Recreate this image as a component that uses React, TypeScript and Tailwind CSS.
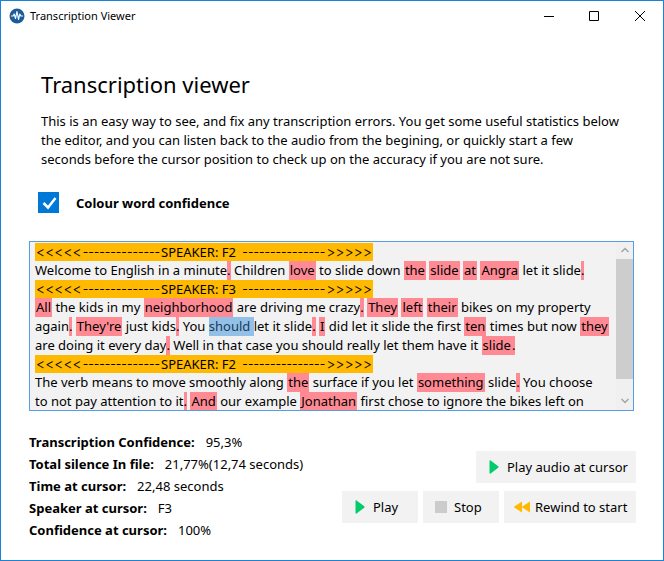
import { useState, type ReactNode } from 'react';

type Tone = 'low' | 'stop' | 'cursor';
type Piece = string | [string, Tone];

interface Line {
  speaker?: string;
  pieces?: Piece[];
}

const lines: Line[] = [
  { speaker: 'F2' },
  {
    pieces: ['Welcome to English in a minute', ['.', 'stop'], ' Children ', ['love', 'low'], ' to slide down ', ['the', 'low'], ' ', ['slide', 'low'], ' ', ['at', 'low'], ' ', ['Angra', 'low'], ' let it slide', ['.', 'stop']],
  },
  { speaker: 'F3' },
  {
    pieces: [['All', 'low'], ' the kids in my ', ['neighborhood', 'low'], ' are driving me crazy', ['.', 'stop'], ' ', ['They', 'low'], ' ', ['left', 'low'], ' ', ['their', 'low'], ' bikes on my property'],
  },
  {
    pieces: ['again', ['.', 'stop'], ' ', ["They're", 'low'], ' just kids', ['.', 'stop'], ' You ', ['should ', 'cursor'], 'let it slide', ['.', 'stop'], ' ', ['I', 'low'], ' did let it slide the first ', ['ten', 'low'], ' times but now ', ['they', 'low']],
  },
  {
    pieces: ['are doing it every day', ['.', 'stop'], ' Well in that case you should really let them have it ', ['slide', 'low'], ['.', 'stop']],
  },
  { speaker: 'F2' },
  {
    pieces: ['The verb means to move smoothly along ', ['the', 'low'], ' surface if you let ', ['something', 'low'], ' slide', ['.', 'stop'], ' You choose'],
  },
  {
    pieces: ['to not pay attention to it', ['.', 'stop'], ' ', ['And', 'low'], ' our example ', ['Jonathan', 'low'], ' first chose to ignore the bikes left on'],
  },
];

const stats = [
  { label: 'Transcription Confidence:', value: '95,3%' },
  { label: 'Total silence In file:', value: '21,77%(12,74 seconds)' },
  { label: 'Time at cursor:', value: '22,48 seconds' },
  { label: 'Speaker at cursor:', value: 'F3' },
  { label: 'Confidence at cursor:', value: '100%' },
];

function getToneColor(tone: Tone, coloured: boolean) {
  switch (tone) {
    case 'cursor':
      return 'bg-[#92c0e6] text-[#1c3a5c]';
    case 'low':
      return coloured ? 'bg-[#ff8a94] px-px' : 'px-px';
    default:
      return coloured ? 'bg-[#ff8a94]' : '';
  }
}

function SpeakerLine({ name }: { name: string }) {
  return (
    <div className="flex h-[18px] w-fit bg-[#ffb900] pl-px leading-[18px]">
      <span className="font-['Inter',sans-serif] text-[14px] font-light">{'<<<<<'}</span>
      <span className="pl-px font-['Inter',sans-serif] text-[12px]">{'-'.repeat(14)}</span>
      <span className="whitespace-pre pr-[3px] pl-px">SPEAKER: {name} </span>
      <span className="font-['Inter',sans-serif] text-[12px]">{'-'.repeat(15)}</span>
      <span className="px-px font-['Inter',sans-serif] text-[14px] font-light">{'>>>>>'}</span>
    </div>
  );
}

function TextLine({ pieces, coloured }: { pieces: Piece[]; coloured: boolean }) {
  return (
    <p className="flex h-[19px] whitespace-pre leading-[19px]">
      {pieces.map((piece, i) =>
        typeof piece === 'string' ? (
          <span key={i}>{piece}</span>
        ) : (
          <span key={i} className={getToneColor(piece[1], coloured)}>{piece[0]}</span>
        )
      )}
    </p>
  );
}

function PlayIcon() {
  return (
    <svg width="10" height="14" viewBox="0 0 10 14" aria-hidden="true">
      <path d="M.5 1.2C.5.4 1 .1 1.600.6l7.600 5.700c.5.4.5 1 0 1.400l-7.600 5.700c-.6.5-1.100.2-1.100-.6z" fill="#00cc6a" />
    </svg>
  );
}

function ActionButton({ icon, className, children }: { icon: ReactNode; className: string; children: ReactNode }) {
  return (
    <button type="button" className={`flex h-8 items-center bg-[#f2f2f2] hover:bg-[#e6e6e6] ${className}`}>
      {icon}
      <span className="pt-0.5">{children}</span>
    </button>
  );
}

export default function App() {
  const [coloured, setColoured] = useState(true);

  return (
    <div className="min-h-screen border border-[#1883d7] bg-white font-['Noto_Sans','Open_Sans',sans-serif] text-[13px] text-black">
      {/* Title bar */}
      <header className="flex h-[29px] items-center justify-between pl-2">
        <div className="flex items-center gap-[5px]">
          <svg width="16" height="16" viewBox="0 0 16 16" aria-hidden="true">
            <circle cx="8" cy="8" r="7.500" fill="#1d5c9b" />
            <path d="M2 8h2.200l1-2 1.300 4.500L8 3.500l1.500 8L10.800 6l1 2H14" fill="none" stroke="#eef6fc" strokeWidth="1.200" strokeLinejoin="round" />
          </svg>
          <span className="pt-0.5 text-[11px]">Transcription Viewer</span>
        </div>
        <div className="flex">
          <button type="button" aria-label="Minimize" className="grid h-[29px] w-[45px] place-items-center">
            <svg width="10" height="10" viewBox="0 0 10 10"><path d="M0 5.500h10" stroke="#000" /></svg>
          </button>
          <button type="button" aria-label="Maximize" className="grid h-[29px] w-[46px] place-items-center">
            <svg width="10" height="10" viewBox="0 0 10 10"><path d="M.5.5h9v9h-9z" fill="none" stroke="#000" /></svg>
          </button>
          <button type="button" aria-label="Close" className="grid h-[29px] w-[46px] place-items-center">
            <svg width="10" height="10" viewBox="0 0 10 10"><path d="M0 0l10 10M10 0L0 10" stroke="#000" /></svg>
          </button>
        </div>
      </header>

      <main className="pr-[27px] pl-7">
        <div className="pl-3">
          <h1 className="pt-[38px] text-[22px] leading-8">Transcription viewer</h1>
          <p className="mt-3 leading-[19px]">
            This is an easy way to see, and fix any transcription errors. You get some useful statistics below
            <br />
            the editor, and you can listen back to the audio from the begining, or quickly start a few
            <br />
            seconds before the cursor position to check up on the accuracy if you are not sure.
          </p>
        </div>

        <label className="mt-[23px] ml-[9px] flex w-fit items-center gap-[17px] font-bold">
          <span className="grid">
            <input
              type="checkbox"
              checked={coloured}
              onChange={(e) => setColoured(e.target.checked)}
              className="col-start-1 row-start-1 size-[21px] appearance-none border border-[#0078d7] checked:bg-[#0078d7]"
            />
            <svg width="21" height="21" viewBox="0 0 21 21" className="pointer-events-none col-start-1 row-start-1" aria-hidden="true">
              <path d="M5.500 11l4.500 4.500L17.500 6" fill="none" stroke="#fff" strokeWidth="2.500" />
            </svg>
          </span>
          <span className="pt-0.5">Colour word confidence</span>
        </label>

        {/* Transcript */}
        <div className="mt-[27px] mr-0.5 flex h-[170px] border border-[#569de5] bg-[#f2f2f2]">
          <div className="min-w-0 flex-1 overflow-hidden pt-px pl-[5px]">
            {lines.map((line, i) =>
              line.speaker ? (
                <SpeakerLine key={i} name={line.speaker} />
              ) : (
                <TextLine key={i} pieces={line.pieces ?? []} coloured={coloured} />
              )
            )}
          </div>
          <div className="flex w-[17px] flex-col bg-[#f0f0f0]">
            <button type="button" aria-label="Scroll up" className="grid h-[17px] place-items-center">
              <svg width="8" height="6" viewBox="0 0 8 6"><path d="M.5 5L4 1.500 7.500 5" fill="none" stroke="#a3a3a3" strokeWidth="1.500" /></svg>
            </button>
            <div className="flex-1">
              <div className="h-[90%] bg-[#cdcdcd]" />
            </div>
            <button type="button" aria-label="Scroll down" className="grid h-[17px] place-items-center">
              <svg width="8" height="6" viewBox="0 0 8 6"><path d="M.5 1L4 4.500 7.500 1" fill="none" stroke="#a3a3a3" strokeWidth="1.500" /></svg>
            </button>
          </div>
        </div>

        <div className="flex justify-between">
          <dl className="mt-[21px]">
            {stats.map((stat) => (
              <div key={stat.label} className="flex h-[22px] items-center gap-[11px] whitespace-nowrap">
                <dt className="font-bold">{stat.label}</dt>
                <dd>{stat.value}</dd>
              </div>
            ))}
          </dl>
          <div className="mt-10 flex flex-col items-end gap-2">
            <ActionButton icon={<PlayIcon />} className="w-40 gap-2 pl-[13px]">Play audio at cursor</ActionButton>
            <div className="flex gap-[5px]">
              <ActionButton icon={<PlayIcon />} className="w-[76px] gap-2 pl-[13px]">Play</ActionButton>
              <ActionButton icon={<span className="size-3 bg-[#cccccc]" />} className="w-[76px] gap-[7px] pl-3">Stop</ActionButton>
              <ActionButton
                icon={
                  <svg width="16" height="12" viewBox="0 0 16 12" aria-hidden="true">
                    <path d="M8 .5v11L.3 6.500q-.6-.5 0-1zM16 .5v11L8.300 6.500q-.6-.5 0-1z" fill="#ffb900" />
                  </svg>
                }
                className="w-[132px] gap-[5px] pl-[10px]"
              >
                Rewind to start
              </ActionButton>
            </div>
          </div>
        </div>
      </main>
    </div>
  );
}
